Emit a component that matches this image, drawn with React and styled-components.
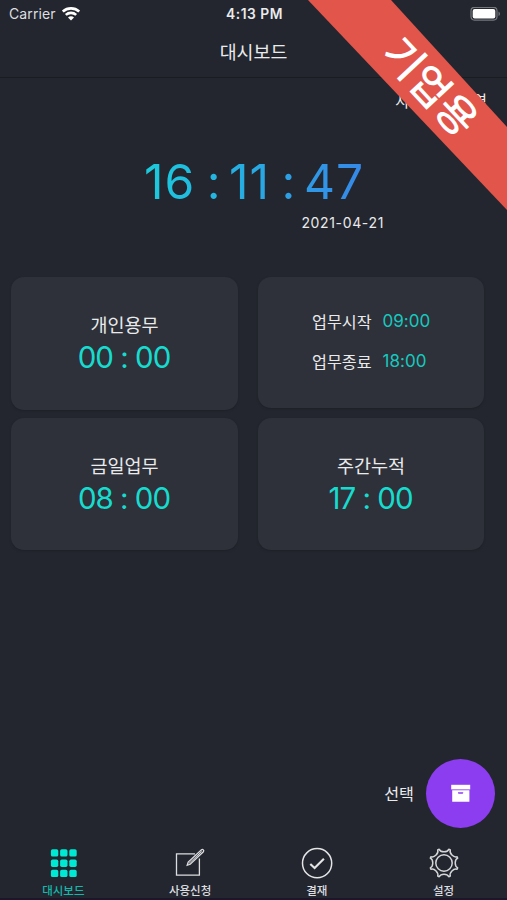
import React from "react";
import styled, { createGlobalStyle } from "styled-components";

const App = () => {
  return (
    <Screen>
      <GlobalStyle />
      <StatusBar>
        <Carrier>
          Carrier
          <WifiIcon />
        </Carrier>
        <StatusTime>4:13 PM</StatusTime>
        <BatteryIcon />
      </StatusBar>
      <Header>대시보드</Header>
      <HistoryLink>사용신청 내역</HistoryLink>
      <Clock>
        <span>16</span>
        <Colon>:</Colon>
        <span>11</span>
        <Colon>:</Colon>
        <span>47</span>
      </Clock>
      <Today>2021-04-21</Today>

      <Cards>
        <Card $height={133}>
          <CardTitle>개인용무</CardTitle>
          <CardTime>00 : 00</CardTime>
        </Card>
        <Schedule $height={131}>
          <ScheduleRow>
            업무시작 <ScheduleTime>09:00</ScheduleTime>
          </ScheduleRow>
          <ScheduleRow>
            업무종료 <ScheduleTime>18:00</ScheduleTime>
          </ScheduleRow>
        </Schedule>
        <Card $height={132}>
          <CardTitle>금일업무</CardTitle>
          <CardTime>08 : 00</CardTime>
        </Card>
        <Card $height={132}>
          <CardTitle>주간누적</CardTitle>
          <CardTime>17 : 00</CardTime>
        </Card>
      </Cards>

      <SelectRow>
        <SelectLabel>선택</SelectLabel>
        <SelectButton aria-label="선택">
          <ArchiveIcon />
        </SelectButton>
      </SelectRow>

      <TabBar>
        <Tab $active>
          <GridIcon />
          대시보드
        </Tab>
        <Tab>
          <EditIcon />
          사용신청
        </Tab>
        <Tab>
          <CheckIcon />
          결재
        </Tab>
        <Tab>
          <GearIcon />
          설정
        </Tab>
      </TabBar>

      <Ribbon>
        <RibbonText>기업용</RibbonText>
      </Ribbon>
    </Screen>
  );
};

export default App;

const WifiIcon = () => (
  <svg width="18" height="14" viewBox="0 0 18 14" fill="none" stroke="#fff" strokeWidth="2.6">
    <path d="M.8 4.6C5.4.3 12.6.3 17.2 4.6" />
    <path d="M3.8 7.9c3-2.7 7.4-2.7 10.4 0" />
    <path d="M9 13.4 6 10.4c1.7-1.5 4.3-1.5 6 0z" fill="#fff" stroke="none" />
  </svg>
);

const BatteryIcon = () => (
  <svg width="31" height="14" viewBox="0 0 31 14">
    <rect x="1" y="0.3" width="26" height="12.8" rx="3.5" fill="none" stroke="#74777c" strokeWidth="1.2" />
    <rect x="2.7" y="1.9" width="22.6" height="9.6" rx="2" fill="#fff" />
    <path d="M28.5 4.4c2 .9 2 3.7 0 4.6z" fill="#74777c" />
  </svg>
);

const ArchiveIcon = () => (
  <svg width="20" height="19" viewBox="0 0 20 19" fill="#fff">
    <path d="M.2.8h19v4.6h-19z" />
    <path
      fillRule="evenodd"
      d="M1.2 6.3h17.2v11.4h-17.2zM7 8.3v.6c0 .5.3.8.8.8h3.6c.5 0 .8-.3.8-.8v-.6z"
    />
  </svg>
);

const GridIcon = () => (
  <svg width="32" height="32" viewBox="0 0 32 32" fill="#00e9d4">
    {[2.2, 12.5, 22.7].map((y) =>
      [3.9, 13.1, 22.3].map((x) => (
        <rect key={`${x}-${y}`} x={x} y={y} width="7.4" height="7.4" rx="1.7" />
      ))
    )}
  </svg>
);

const EditIcon = () => (
  <svg width="32" height="32" viewBox="0 0 32 32" fill="none" stroke="#dcdde0" strokeWidth="1.3">
    <path d="M21 6.9H2.5v21.3h22.9V11.6" />
    <path d="m13.2 18.3 1-3.2L27.5 2.8c1.3-1 2.9.6 1.9 1.9L16.2 17.3z" />
    <path d="m14.7 16.7 13-12.2" strokeWidth="1" />
  </svg>
);

const CheckIcon = () => (
  <svg width="32" height="32" viewBox="0 0 32 32" fill="none" stroke="#e3e4e6">
    <circle cx="16.1" cy="16.2" r="14.6" strokeWidth="1.5" />
    <path d="m9.3 17 4.3 4.1 9.3-9.3" strokeWidth="2.1" />
  </svg>
);

const GearIcon = () => (
  <svg width="32" height="32" viewBox="0 0 32 32" fill="none" stroke="#d5d6d9" strokeWidth="1.5">
    <circle cx="16" cy="16" r="8.2" />
    <path
      strokeLinejoin="round"
      d="M11.2 2.3C12.8 5.6 19.2 5.6 20.8 2.3L22.3 2.9C21.1 6.4 25.6 10.9 29.1 9.7L29.7 11.2C26.4 12.8 26.4 19.2 29.7 20.8L29.1 22.3C25.6 21.1 21.1 25.6 22.3 29.1L20.8 29.7C19.2 26.4 12.8 26.4 11.2 29.7L9.7 29.1C10.9 25.6 6.4 21.1 2.9 22.3L2.3 20.8C5.6 19.2 5.6 12.8 2.3 11.2L2.9 9.7C6.4 10.9 10.9 6.4 9.7 2.9Z"
    />
  </svg>
);

const GlobalStyle = createGlobalStyle`
  * {
    box-sizing: border-box;
  }

  body {
    margin: 0;
    background: #23262e;
  }
`;

const Screen = styled.div`
  position: relative;
  display: flex;
  flex-direction: column;
  height: 900px;
  overflow: hidden;
  background: #23262e;
  border-bottom: 2px solid #1c162b;
  color: #e9eaec;
  font-family: Inter, "Noto Sans CJK KR", sans-serif;
  font-feature-settings: "calt" 0;
`;

const StatusBar = styled.div`
  display: grid;
  grid-template-columns: 1fr auto 1fr;
  align-items: center;
  height: 28px;
  padding: 0 6px 0 9px;

  > svg {
    justify-self: end;
  }
`;

const Carrier = styled.div`
  display: flex;
  align-items: center;
  gap: 6px;
  font-size: 14px;
  line-height: 26px;
  letter-spacing: 0.1px;
  color: #dddee0;
`;

const StatusTime = styled.div`
  font-size: 13.8px;
  font-weight: 600;
  letter-spacing: 0.5px;
  transform: translateX(-0.5px);
`;

const Header = styled.h1`
  height: 50px;
  margin: 0;
  border-bottom: 1px solid #1a1c22;
  font-size: 18.4px;
  font-weight: 400;
  line-height: 48px;
  text-align: center;
`;

const HistoryLink = styled.div`
  height: 44px;
  padding-right: 20px;
  font-size: 15.8px;
  line-height: 47px;
  text-align: right;
`;

const Clock = styled.div`
  display: flex;
  align-self: center;
  gap: 9.5px;
  height: 60px;
  margin: 30px 0 0 1px;
  background: linear-gradient(90deg, #1bcbdc, #3688e8);
  background-clip: text;
  color: transparent;
  font-size: 48px;
  line-height: 60px;
  letter-spacing: 1px;
`;

const Colon = styled.span`
  margin: 0 -2px 0 2px;
`;

const Today = styled.div`
  height: 20px;
  margin-top: 1px;
  padding-right: 123px;
  font-size: 14px;
  line-height: 20px;
  letter-spacing: 0.65px;
  text-align: right;
`;

const Cards = styled.div`
  display: grid;
  grid-template-columns: 227px 226px;
  grid-template-rows: 133px 132px;
  align-items: start;
  gap: 8px 20px;
  margin: 44px 0 0 11px;
`;

const Card = styled.section`
  display: flex;
  flex-direction: column;
  align-items: center;
  height: ${({ $height }) => $height}px;
  padding-top: 35px;
  border-radius: 13px;
  background: #2e3139;
  box-shadow: 0 1px 2px #1e2027;
`;

const CardTitle = styled.h2`
  margin: 0;
  font-size: 18.5px;
  font-weight: 400;
  line-height: 26px;
`;

const CardTime = styled.div`
  padding-right: 1px;
  color: #16dccf;
  font-size: 29.5px;
  line-height: 38px;
  letter-spacing: -1px;
`;

const Schedule = styled(Card)`
  align-items: flex-start;
  padding: 24px 0 0 54px;
`;

const ScheduleRow = styled.div`
  display: flex;
  align-items: center;
  gap: 11px;
  height: 40px;
  font-size: 16.2px;
`;

const ScheduleTime = styled.span`
  color: #16c9bf;
  font-size: 17px;
`;

const SelectRow = styled.div`
  display: flex;
  align-items: center;
  align-self: flex-end;
  gap: 12px;
  margin: auto 12px 12px 0;
`;

const SelectLabel = styled.span`
  padding-bottom: 1px;
  font-size: 16.2px;
`;

const SelectButton = styled.button`
  display: flex;
  align-items: center;
  justify-content: center;
  width: 69px;
  height: 69px;
  padding: 0;
  border: none;
  border-radius: 50%;
  background: #8c3df0;
`;

const TabBar = styled.nav`
  display: grid;
  grid-template-columns: repeat(4, 1fr);
  height: 58px;
  padding-top: 7px;
`;

const Tab = styled.div`
  display: flex;
  flex-direction: column;
  align-items: center;
  color: ${({ $active }) => ($active ? "#14b8ac" : "#dcdde0")};
  font-size: 11.5px;
  font-weight: 500;
  line-height: 24px;

  svg {
    flex: none;
  }
`;

/* diagonal banner over the top right corner */
const Ribbon = styled.div`
  position: absolute;
  top: 0;
  right: 0;
  display: flex;
  align-items: center;
  justify-content: center;
  width: 199px;
  height: 210px;
  background: #e2554b;
  clip-path: polygon(0 0, 83px 0, 100% 127px, 100% 100%);
`;

const RibbonText = styled.div`
  color: #fff;
  font-size: 42px;
  font-weight: 500;
  line-height: 1;
  white-space: nowrap;
  transform: translate(22px, -18px) rotate(47deg);
`;
